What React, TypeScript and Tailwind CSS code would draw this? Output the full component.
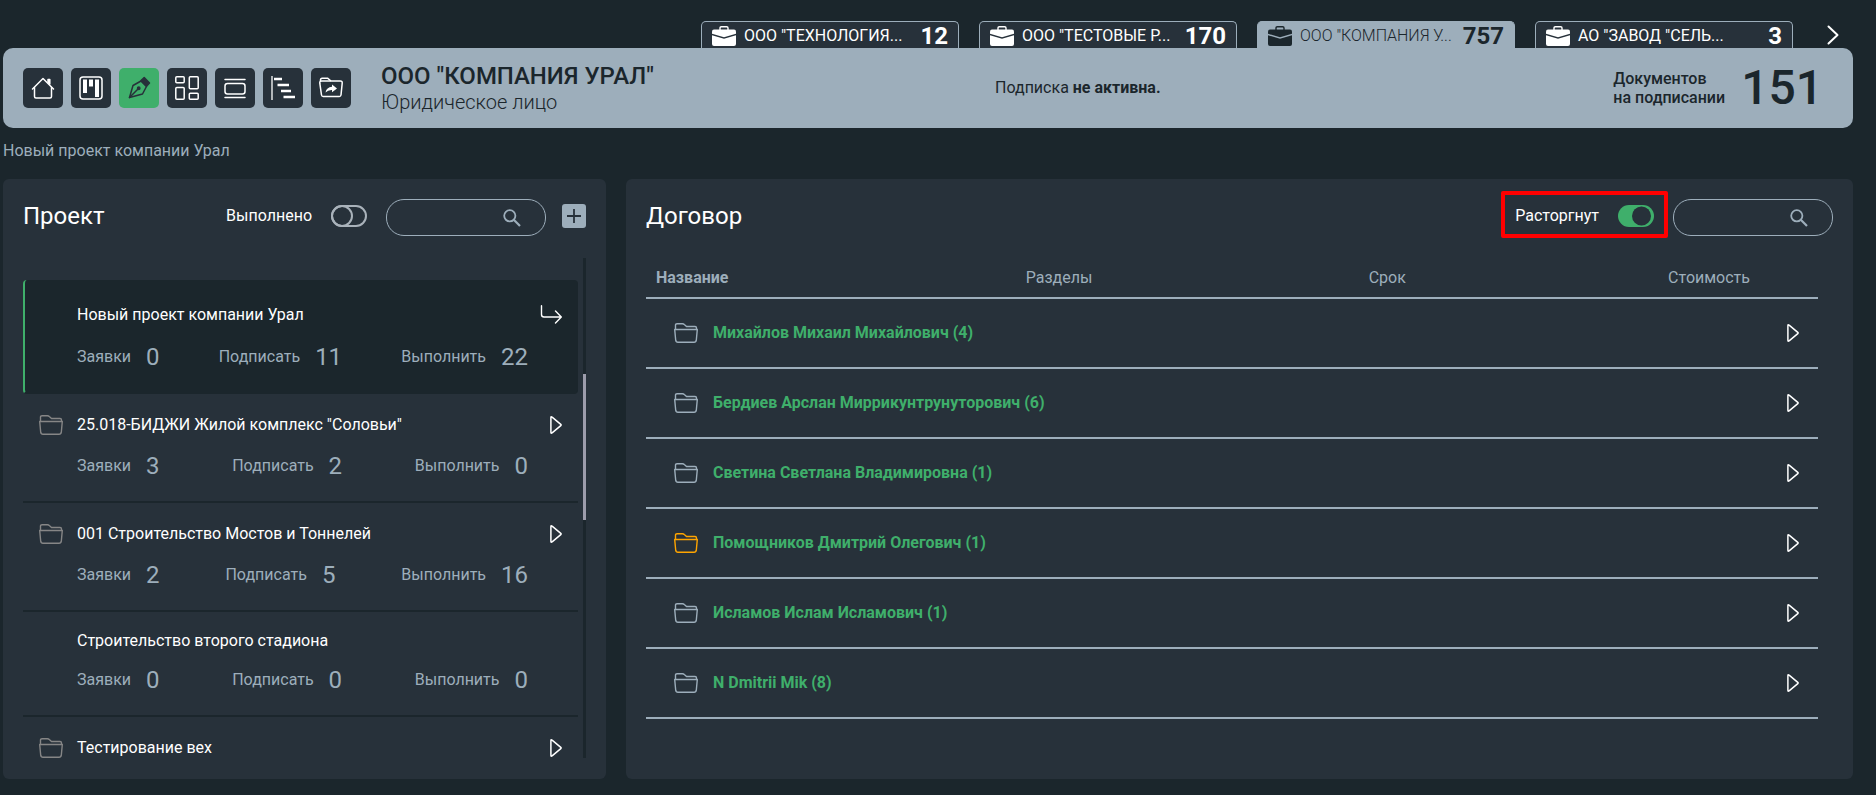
import React, { useState } from "react";

type IconProps = { className?: string };

const HomeIcon = () => (
  <svg className="size-6" viewBox="0 0 24 24" fill="none" stroke="currentColor" strokeWidth="1.5" strokeLinecap="round" strokeLinejoin="round">
    <path d="M1.500 13 12 2.500 22.500 13" />
    <path d="M3.500 11.500v9a1.500 1.500 0 0 0 1.500 1.500h14a1.500 1.500 0 0 0 1.500-1.500v-9" />
    <path d="M17 6V3.500h1.800V8z" fill="currentColor" />
  </svg>
);

const BoardIcon = () => (
  <svg className="size-6" viewBox="0 0 24 24" fill="none" stroke="currentColor" strokeWidth="1.5">
    <rect x="1" y="1" width="22" height="22" rx="3" />
    <path d="M4 3.500h4v13.500h-4zM10 3.500h4v7h-4zM16 3.500h4v17.500h-4z" fill="currentColor" stroke="none" />
  </svg>
);

const PenIcon = () => (
  <svg className="size-6" viewBox="0 0 24 24" fill="none" stroke="currentColor" strokeWidth="1.500" strokeLinejoin="round" strokeLinecap="round">
    <path d="M2.500 21.500 6 9.500 14 5l5.500 5.500L15.500 18z" />
    <path d="M2.500 21.500 11 13" />
    <circle cx="11.700" cy="12.300" r="1.200" fill="currentColor" />
    <path d="M14 4.500 17.200 1.500l5.300 5.500-3 3.300z" fill="currentColor" />
  </svg>
);

const TilesIcon = () => (
  <svg className="size-6" viewBox="0 0 24 24" fill="none" stroke="currentColor" strokeWidth="1.5">
    <rect x="0.800" y="0.800" width="8.400" height="6" rx="1" />
    <rect x="0.800" y="11.500" width="8.400" height="11.700" rx="1" />
    <rect x="14.300" y="0.800" width="8.900" height="12" rx="1" />
    <rect x="14.300" y="17.200" width="8.900" height="6" rx="1" />
  </svg>
);

const CarouselIcon = () => (
  <svg className="size-6" viewBox="0 0 24 24" fill="none" stroke="currentColor" strokeWidth="1.500" strokeLinecap="round">
    <path d="M2 3.500h20M2 21.500h20" />
    <rect x="2" y="7.500" width="20" height="10.500" rx="2.500" />
  </svg>
);

const GanttIcon = () => (
  <svg className="size-6" viewBox="0 0 24 24" fill="none" stroke="currentColor">
    <path d="M1 0v24" strokeWidth="1.300" />
    <path d="M3 3h8M6.500 9H18M10 15h10M12.500 21H24" strokeWidth="2.400" />
  </svg>
);

const FolderShareIcon = () => (
  <svg className="size-6" viewBox="0 0 24 24" fill="none" stroke="currentColor" strokeWidth="1.500" strokeLinejoin="round">
    <path d="M2.500 19 .8 7.200Q.6 5 2.700 5H21.300Q23.400 5 23.200 7.200L22 19q-.2 1.500-1.700 1.500H4.200Q2.700 20.500 2.500 19z" />
    <path d="M1.500 5.200V4Q1.500 2.200 3.200 2.200H8.500L12 5" />
    <path d="M13 8.500 18 12.500 13 16.300V14Q9 13.800 6.500 16.500 7.500 11.200 13 10.800z" fill="currentColor" stroke="none" />
  </svg>
);

const BriefcaseIcon = () => (
  <svg className="h-5 w-6 shrink-0" viewBox="0 0 24 20" fill="currentColor">
    <path d="M8 4V2Q8 .7 9.300 .7H14.700Q16 .7 16 2V4" fill="none" stroke="currentColor" strokeWidth="1.400" />
    <path d="M2 3.500H22Q24 3.500 24 5.500V7.700L12 11.300 0 7.700V5.500Q0 3.500 2 3.500z" />
    <path d="M0 9.200 12 12.800 24 9.200V18Q24 20 22 20H2Q0 20 0 18z" />
  </svg>
);

const FolderIcon = ({ className = "" }: IconProps) => (
  <svg className={"h-5 w-6 shrink-0 " + className} viewBox="0 0 24 20" fill="none" stroke="currentColor" strokeWidth="1.400" strokeLinejoin="round">
    <path d="M1.500 6.500V2Q1.500 .7 3 .7H8.500Q9.500 .7 10.300 1.500L12.500 3.500H21Q22.500 3.500 22.500 5V6.500" />
    <path d="M.7 6.500H23.300L22.300 17.200Q22 19.300 20 19.300H4Q2 19.300 1.700 17.200z" />
  </svg>
);

const TriangleIcon = () => (
  <svg className="h-5 w-3 shrink-0" viewBox="0 0 12 20" fill="none" stroke="currentColor" strokeWidth="1.500" strokeLinejoin="round">
    <path d="M.9 2.700Q.9 1 2.100 2.200L10.800 9.400Q11.500 10 10.800 10.600L2.100 17.800Q.9 19 .9 17.300z" />
  </svg>
);

const TurnIcon = () => (
  <svg className="h-5 w-[22px] shrink-0" viewBox="0 0 22 20" fill="none" stroke="currentColor" strokeWidth="1.400" strokeLinecap="round" strokeLinejoin="round">
    <path d="M1.500 .7v8.800Q1.500 12 4 12H21.300M15.500 6l5.800 6-5.800 6" />
  </svg>
);

const SearchIcon = () => (
  <svg className="size-[18px]" viewBox="0 0 18 18" fill="none" stroke="currentColor" strokeWidth="1.800">
    <circle cx="6.800" cy="6.800" r="5.600" />
    <path d="M10.800 10.800 17 17" strokeWidth="2.200" />
  </svg>
);

function Toggle({ label, initial }: { label: string; initial: boolean }) {
  const [on, setOn] = useState(initial);
  return (
    <label className="flex cursor-pointer items-center gap-[19px] text-base leading-5 text-white">
      <span>{label}</span>
      <input type="checkbox" role="switch" className="peer sr-only" checked={on} onChange={() => setOn(!on)} />
      <svg className="h-[22px] w-9" viewBox="0 0 36 22" aria-hidden="true">
        {on ? (
          <>
            <rect width="36" height="22" rx="11" fill="#3faf6b" />
            <circle cx="23.500" cy="11" r="9.500" fill="#27313a" />
          </>
        ) : (
          <>
            <rect x="1" y="1" width="34" height="20" rx="10" fill="none" stroke="#a9b2ba" strokeWidth="2" />
            <circle cx="11" cy="11" r="10" fill="none" stroke="#a9b2ba" strokeWidth="2" />
          </>
        )}
      </svg>
    </label>
  );
}

function SearchBox({ label }: { label: string }) {
  return (
    <div className="mt-[3px] flex h-[37px] w-40 items-center rounded-[18px] border border-[#9daebb] pr-6 pl-4 text-[#9daebb]">
      <input type="text" aria-label={label} className="h-full min-w-0 flex-1 bg-transparent text-base text-white outline-none" />
      <button type="button" aria-label="Найти">
        <SearchIcon />
      </button>
    </div>
  );
}

const tabs = [
  { name: 'ООО "ТЕХНОЛОГИЯ...', count: 12 },
  { name: 'ООО "ТЕСТОВЫЕ Р...', count: 170 },
  { name: 'ООО "КОМПАНИЯ У...', count: 757, active: true },
  { name: 'АО "ЗАВОД "СЕЛЬ...', count: 3 },
];

const tools = [
  { label: "Главная", icon: <HomeIcon /> },
  { label: "Доска", icon: <BoardIcon /> },
  { label: "Подписание", icon: <PenIcon />, active: true },
  { label: "Плитки", icon: <TilesIcon /> },
  { label: "Карусель", icon: <CarouselIcon /> },
  { label: "График", icon: <GanttIcon /> },
  { label: "Папки", icon: <FolderShareIcon /> },
];

type Project = { name: string; kind: "current" | "folder" | "plain"; stats?: [number, number, number] };

const projects: Project[] = [
  { name: "Новый проект компании Урал", kind: "current", stats: [0, 11, 22] },
  { name: '25.018-БИДЖИ Жилой комплекс "Соловьи"', kind: "folder", stats: [3, 2, 0] },
  { name: "001 Строительство Мостов и Тоннелей", kind: "folder", stats: [2, 5, 16] },
  { name: "Строительство второго стадиона", kind: "plain", stats: [0, 0, 0] },
  { name: "Тестирование вех", kind: "folder" },
];

const statLabels = ["Заявки", "Подписать", "Выполнить"];

const itemStyles = {
  current: "border-l-2 border-l-[#3faf6b] bg-[#1b262c] pt-5 pl-[52px] rounded-sm",
  folder: "pt-[17px] pl-4",
  plain: "pt-[17px] pl-[54px]",
};

const rowHeights = { current: "h-[30px]", folder: "h-7", plain: "h-6" };

const contracts = [
  { name: "Михайлов Михаил Михайлович (4)" },
  { name: "Бердиев Арслан Миррикунтрунуторович (6)" },
  { name: "Светина Светлана Владимировна (1)" },
  { name: "Помощников Дмитрий Олегович (1)", marked: true },
  { name: "Исламов Ислам Исламович (1)" },
  { name: "N Dmitrii Mik (8)" },
];

function ProjectItem({ project }: { project: Project }) {
  return (
    <li className={"border-b-2 border-b-[#1b262c] pr-4 pb-[21px] " + itemStyles[project.kind]}>
      <div className={"flex items-center text-white " + rowHeights[project.kind]}>
        {project.kind === "folder" && <FolderIcon className="mr-[14px] text-[#868686]" />}
        <a href="#" className="flex-1 text-base leading-5">{project.name}</a>
        {project.kind !== "plain" && (
          <button type="button" aria-label="Открыть проект">
            {project.kind === "current" ? <TurnIcon /> : <TriangleIcon />}
          </button>
        )}
      </div>
      {project.stats && (
        <div className={"mt-[13px] mr-[34px] flex justify-between text-[#9daebb] " + (project.kind === "folder" ? "ml-[38px]" : "")}>
          {project.stats.map((value, i) => (
            <div key={statLabels[i]} className="flex h-7 items-center gap-[15px]">
              <span className="text-base leading-5">{statLabels[i]}</span>
              <span className="text-2xl leading-7">{value}</span>
            </div>
          ))}
        </div>
      )}
    </li>
  );
}

export default function App() {
  return (
    <div className="flex h-screen min-h-[600px] flex-col bg-[#1b262c] pr-[23px] pb-4 pl-[3px] font-[Roboto,sans-serif]">
      <nav className="flex shrink-0 justify-end gap-5 pt-[21px] pr-[14px]">
        {tabs.map((tab) => (
          <a
            key={tab.name}
            href="#"
            className={
              "flex h-[27px] w-[258px] items-center rounded-t-[5px] border border-b-0 border-[#9daebb] px-[10px] pt-px " +
              (tab.active ? "bg-[#9daebb] text-[#1b262c]" : "bg-[#27313a] text-white")
            }
          >
            <BriefcaseIcon />
            <span className={"ml-2 flex-1 whitespace-nowrap text-base leading-5 " + (tab.active ? "font-light" : "")}>{tab.name}</span>
            <span className="text-2xl leading-6 font-bold">{tab.count}</span>
          </a>
        ))}
        <button type="button" aria-label="Следующие компании" className="ml-[14px] text-white">
          <svg className="h-5 w-3" viewBox="0 0 12 20" fill="none" stroke="currentColor" strokeWidth="2" strokeLinecap="round" strokeLinejoin="round">
            <path d="M1.500 1.500 10.500 10 1.500 18.500" />
          </svg>
        </button>
      </nav>

      <header className="grid h-20 shrink-0 grid-cols-[54%_1fr_auto] items-center rounded-[10px] bg-[#9daebb] pr-[30px] pl-5 text-[#1b262c]">
        <div className="flex items-center">
          <div className="flex gap-2">
            {tools.map((tool) => (
              <button
                key={tool.label}
                type="button"
                aria-label={tool.label}
                className={
                  "flex size-10 items-center justify-center rounded-[5px] " +
                  (tool.active ? "bg-[#3faf6b] text-[#27313a]" : "bg-[#27313a] text-white")
                }
              >
                {tool.icon}
              </button>
            ))}
          </div>
          <div className="ml-[30px] whitespace-nowrap">
            <h1 className="text-2xl leading-7 font-medium">ООО "КОМПАНИЯ УРАЛ"</h1>
            <p className="text-xl leading-6 font-light">Юридическое лицо</p>
          </div>
        </div>
        <p className="text-base leading-5">
          Подписка <b className="font-bold">не активна.</b>
        </p>
        <div className="flex items-center justify-end gap-4">
          <p className="text-base leading-[19px] font-medium">
            Документов
            <br />
            на подписании
          </p>
          <span className="text-5xl leading-[56px] font-medium">151</span>
        </div>
      </header>

      <p className="mt-[13px] shrink-0 text-base leading-5 text-[#9daebb]">Новый проект компании Урал</p>

      <main className="mt-[18px] flex min-h-0 flex-1 gap-5">
        <section className="flex w-[603px] shrink-0 flex-col rounded-md bg-[#27313a] px-5 pt-[19px] pb-[21px]">
          <div className="flex h-9 shrink-0 items-center">
            <h2 className="flex-1 text-2xl leading-7 text-white">Проект</h2>
            <Toggle label="Выполнено" initial={false} />
            <div className="ml-[19px]">
              <SearchBox label="Поиск проекта" />
            </div>
            <button type="button" aria-label="Добавить проект" className="ml-4 flex size-6 items-center justify-center rounded-[3px] bg-[#9daebb] text-[#27313a]">
              <svg className="size-4" viewBox="0 0 16 16" stroke="currentColor" strokeWidth="1.800">
                <path d="M8 1v14M1 8h14" />
              </svg>
            </button>
          </div>
          <div className="mt-6 flex min-h-0 flex-1 gap-[5px]">
            <ul className="min-w-0 flex-1 overflow-hidden pt-[22px]">
              {projects.map((project) => (
                <ProjectItem key={project.name} project={project} />
              ))}
            </ul>
            <div className="w-[3px] bg-[#1b262c] pt-[116px]">
              <div className="h-[146px] bg-[#9c9cab]" />
            </div>
          </div>
        </section>

        <section className="flex min-w-0 flex-1 flex-col rounded-md bg-[#27313a] px-5 pt-3">
          <div className="flex h-[50px] shrink-0 items-center">
            <h2 className="flex-1 text-2xl leading-7 text-white">Договор</h2>
            <div className="mr-[5px] flex h-[47px] items-center self-start rounded-xs border-4 border-[#ff0000] px-[10px] pt-[3px]">
              <Toggle label="Расторгнут" initial={true} />
            </div>
            <SearchBox label="Поиск договора" />
          </div>
          <div className="mt-[13px] pr-[15px]">
            <table className="w-full table-fixed border-collapse text-base leading-5">
              <colgroup>
                <col className="w-[22%]" />
                <col className="w-[26.5%]" />
                <col className="w-[29.5%]" />
                <col className="w-[22%]" />
              </colgroup>
              <thead>
                <tr className="h-[44px] border-b-2 border-[#9daebb] text-[#9daebb]">
                  <th scope="col" className="pt-[5px] pl-[10px] text-left font-bold">Название</th>
                  <th scope="col" className="pt-[5px] text-center font-normal">Разделы</th>
                  <th scope="col" className="pt-[5px] text-center font-normal">Срок</th>
                  <th scope="col" className="pt-[5px] pr-[68px] text-right font-normal">Стоимость</th>
                </tr>
              </thead>
              <tbody>
                {contracts.map((contract) => (
                  <tr key={contract.name} className="h-[70px] border-b-2 border-[#9daebb]">
                    <td colSpan={3} className="pl-7">
                      <a href="#" className="flex items-center gap-[15px] leading-[22px] font-bold text-[#3faf6b]">
                        <FolderIcon className={contract.marked ? "text-[#ffa500]" : "text-[#9daebb]"} />
                        {contract.name}
                      </a>
                    </td>
                    <td className="pr-[19px]">
                      <button type="button" aria-label="Развернуть" className="ml-auto block text-white">
                        <TriangleIcon />
                      </button>
                    </td>
                  </tr>
                ))}
              </tbody>
            </table>
          </div>
        </section>
      </main>
    </div>
  );
}
